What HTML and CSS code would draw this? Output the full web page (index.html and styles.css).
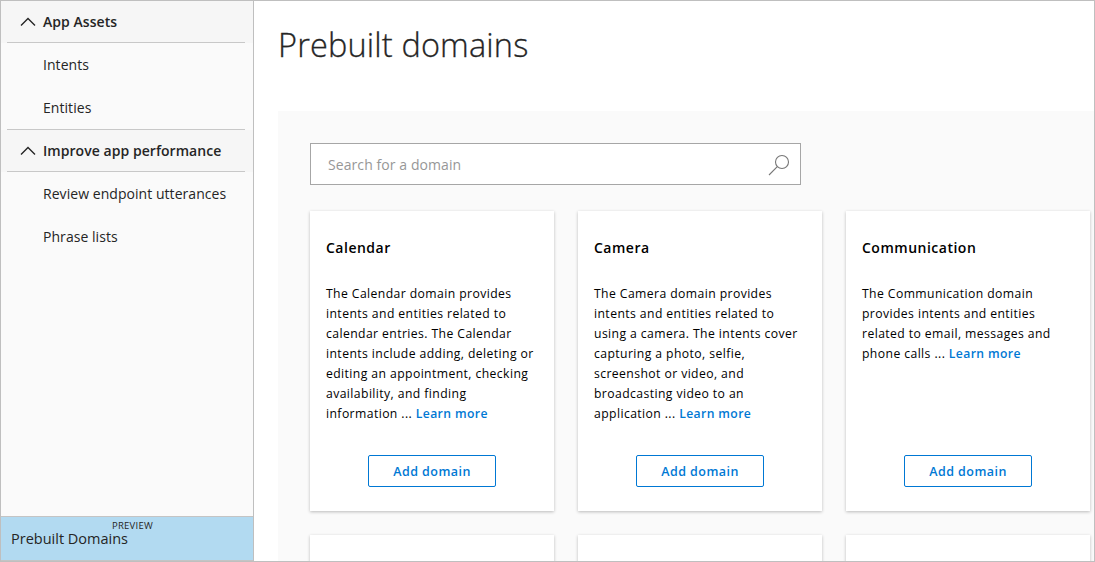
FILE: index.html
```html
<!DOCTYPE html>
<html lang="en">
<head>
<meta charset="utf-8">
<title>Prebuilt domains</title>
<link rel="stylesheet" href="styles.css">
</head>
<body>
<div class="app">
  <nav class="sidebar">
    <section class="group">
      <h2 class="group-title"><svg class="chevron" width="16" height="10" viewBox="0 0 16 10"><path d="M1 8.5 L8 1.5 L15 8.5"/></svg><span>App Assets</span></h2>
      <a class="item">Intents</a>
      <a class="item">Entities</a>
    </section>
    <section class="group ruled">
      <h2 class="group-title"><svg class="chevron" width="16" height="10" viewBox="0 0 16 10"><path d="M1 8.5 L8 1.5 L15 8.5"/></svg><span>Improve app performance</span></h2>
      <a class="item">Review endpoint utterances</a>
      <a class="item">Phrase lists</a>
    </section>
    <a class="current"><span class="current-label">Prebuilt Domains</span><span class="preview">PREVIEW</span></a>
  </nav>
  <main class="main">
    <h1 class="title">Prebuilt domains</h1>
    <div class="panel">
      <div class="search">
        <span class="placeholder">Search for a domain</span>
        <svg class="magnifier" width="22" height="22" viewBox="0 0 22 22"><circle cx="14" cy="8" r="6.5"/><path d="M9.3 12.7 L1 21"/></svg>
      </div>
      <div class="cards">
        <article class="card">
          <h3 class="name">Calendar</h3>
          <p class="desc">The Calendar domain provides<br>intents and entities related to<br>calendar entries. The Calendar<br>intents include adding, deleting or<br>editing an appointment, checking<br>availability, and finding<br>information ... <a class="more">Learn more</a></p>
          <button class="add">Add domain</button>
        </article>
        <article class="card">
          <h3 class="name">Camera</h3>
          <p class="desc">The Camera domain provides<br>intents and entities related to<br>using a camera. The intents cover<br>capturing a photo, selfie,<br>screenshot or video, and<br>broadcasting video to an<br>application ... <a class="more">Learn more</a></p>
          <button class="add">Add domain</button>
        </article>
        <article class="card">
          <h3 class="name">Communication</h3>
          <p class="desc">The Communication domain<br>provides intents and entities<br>related to email, messages and<br>phone calls ... <a class="more">Learn more</a></p>
          <button class="add">Add domain</button>
        </article>
        <article class="card"></article>
        <article class="card"></article>
        <article class="card"></article>
      </div>
    </div>
  </main>
</div>
</body>
</html>
```
FILE: styles.css
```css
* { box-sizing: border-box; }
body {
  margin: 0;
  font-family: "Open Sans", "Noto Sans", sans-serif;
  color: #252525;
  background: #fff;
}
.app {
  display: flex;
  width: 1095px;
  height: 562px;
  border: 1px solid #bfbfbf;
  overflow: hidden;
}
.sidebar {
  display: flex;
  flex-direction: column;
  flex: none;
  width: 253px;
  background: #fafafa;
  border-right: 1px solid #bfbfbf;
}
.group-title {
  display: flex;
  align-items: center;
  height: 42px;
  margin: 0;
  padding: 0 0 2px 19px;
  background: linear-gradient(#c8c8c8, #c8c8c8) 6px 100% / 238px 1px no-repeat #f6f6f6;
  font-size: 14px;
  font-weight: 600;
  letter-spacing: .05px;
  white-space: nowrap;
}
.ruled {
  background: linear-gradient(#c8c8c8, #c8c8c8) 6px 0 / 238px 1px no-repeat;
  padding-top: 1px;
}
.chevron { margin: 1px 7px 0 0; }
.chevron path { fill: none; stroke: #252525; stroke-width: 1.4; }
.item {
  display: flex;
  align-items: center;
  height: 43px;
  padding: 0 0 0 42px;
  font-size: 14px;
  letter-spacing: .05px;
  white-space: nowrap;
}
.current {
  position: relative;
  height: 45px;
  margin-top: auto;
  padding-left: 10px;
  border-top: 1px solid #c4c4c4;
  border-bottom: 1px solid #c4c4c4;
  background: #b2daf1;
  font-size: 14.5px;
  line-height: 43px;
  white-space: nowrap;
}
.preview {
  position: absolute;
  left: 111px;
  top: 3px;
  font-size: 9.5px;
  line-height: 12px;
  letter-spacing: .25px;
}
.main { flex: 1; min-width: 0; padding-left: 24px; }
.title {
  margin: 0;
  height: 110px;
  font-size: 32.5px;
  font-weight: 300;
  line-height: 87px;
  letter-spacing: .15px;
  -webkit-text-stroke: .3px #252525;
  white-space: nowrap;
}
.panel {
  width: 840px;
  padding: 32px 0 0 32px;
  background: #fafafa;
}
.search {
  display: flex;
  align-items: center;
  justify-content: space-between;
  width: 491px;
  height: 42px;
  padding: 0 10px 0 17px;
  border: 1px solid #a6a6a6;
  background: #fff;
  color: #979797;
  font-size: 14px;
  letter-spacing: .08px;
}
.magnifier { margin-top: 2px; }
.magnifier circle, .magnifier path { fill: none; stroke: #777; stroke-width: 1.1; }
.cards {
  display: grid;
  grid-template-columns: repeat(3, 244px);
  grid-auto-rows: 300px;
  gap: 24px;
  margin-top: 26px;
}
.card {
  display: flex;
  flex-direction: column;
  padding: 27px 16px 24px;
  background: #fff;
  box-shadow: 0 1px 3px rgba(0, 0, 0, .25);
  color: #000;
}
.name {
  margin: 0 0 26px;
  font-size: 14px;
  font-weight: 600;
  line-height: 20px;
  letter-spacing: .5px;
}
.desc {
  margin: 0;
  font-size: 12.2px;
  line-height: 20px;
  letter-spacing: .41px;
  white-space: nowrap;
}
.more { color: #0078d4; font-weight: 600; letter-spacing: .38px; }
.add {
  align-self: center;
  width: 128px;
  height: 32px;
  margin-top: auto;
  padding: 0;
  border: 1px solid #0078d4;
  border-radius: 2px;
  background: #fff;
  color: #0078d4;
  font: 600 12.5px "Open Sans", "Noto Sans", sans-serif;
  letter-spacing: .45px;
}
```
